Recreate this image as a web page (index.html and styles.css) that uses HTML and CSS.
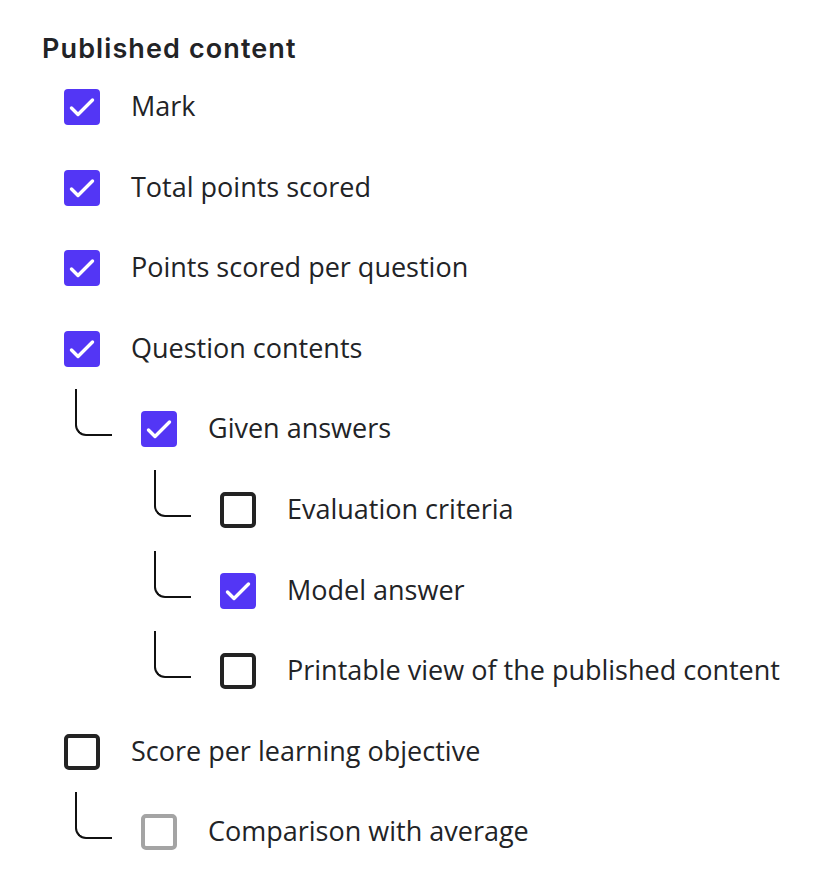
FILE: index.html
```html
<!DOCTYPE html>
<html>
<head>
<meta charset="utf-8">
<link rel="stylesheet" href="styles.css">
</head>
<body>
<section class="panel">
  <h2 class="title">Published content</h2>
  <ul class="list">
    <li class="row lvl0"><span class="box checked"><svg viewBox="0 0 36 36"><path d="M7.5 19 L14 25.5 L28.5 11"/></svg></span><span class="label">Mark</span></li>
    <li class="row lvl0"><span class="box checked"><svg viewBox="0 0 36 36"><path d="M7.5 19 L14 25.5 L28.5 11"/></svg></span><span class="label">Total points scored</span></li>
    <li class="row lvl0"><span class="box checked"><svg viewBox="0 0 36 36"><path d="M7.5 19 L14 25.5 L28.5 11"/></svg></span><span class="label">Points scored per question</span></li>
    <li class="row lvl0"><span class="box checked"><svg viewBox="0 0 36 36"><path d="M7.5 19 L14 25.5 L28.5 11"/></svg></span><span class="label">Question contents</span></li>
    <li class="row lvl1"><span class="conn"></span><span class="box checked"><svg viewBox="0 0 36 36"><path d="M7.5 19 L14 25.5 L28.5 11"/></svg></span><span class="label">Given answers</span></li>
    <li class="row lvl2"><span class="conn"></span><span class="box"></span><span class="label">Evaluation criteria</span></li>
    <li class="row lvl2"><span class="conn"></span><span class="box checked"><svg viewBox="0 0 36 36"><path d="M7.5 19 L14 25.5 L28.5 11"/></svg></span><span class="label">Model answer</span></li>
    <li class="row lvl2"><span class="conn"></span><span class="box"></span><span class="label">Printable view of the published content</span></li>
    <li class="row lvl0"><span class="box"></span><span class="label">Score per learning objective</span></li>
    <li class="row lvl1"><span class="conn"></span><span class="box disabled"></span><span class="label">Comparison with average</span></li>
  </ul>
</section>
</body>
</html>
```

FILE: styles.css
```css
* { box-sizing: border-box; }
html, body { margin: 0; padding: 0; background: #ffffff; }
body { font-family: "Open Sans", "Noto Sans", sans-serif; color: #222326; }
.panel { padding: 30px 0 0 42px; }
.title {
  margin: 0;
  font-family: "Inter", "Open Sans", sans-serif;
  font-weight: 600;
  font-size: 27px;
  line-height: 38px;
  letter-spacing: 1.1px;
  color: #222326;
}
.list {
  list-style: none;
  margin: 21px 0 0 0;
  padding: 0 0 0 22px;
  display: flex;
  flex-direction: column;
  gap: 44.6px;
}
.row { display: flex; align-items: center; height: 36px; }
.lvl1 { padding-left: 11px; }
.lvl2 { padding-left: 90px; }
.conn {
  align-self: flex-start;
  width: 37px;
  height: 47px;
  margin-top: -22px;
  margin-right: 29px;
  border-left: 2px solid #111;
  border-bottom: 2px solid #111;
  border-bottom-left-radius: 11px;
  flex: none;
}
.box {
  width: 36px;
  height: 36px;
  flex: none;
  border: 4px solid #232323;
  border-radius: 5px;
  display: flex;
  align-items: center;
  justify-content: center;
}
.box.checked { background: #5336F5; border: none; border-radius: 4px; }
.box.disabled { border-color: #a4a4a4; }
.box svg { width: 36px; height: 36px; display: block; }
.box svg path { fill: none; stroke: #ffffff; stroke-width: 3.4; stroke-linecap: round; stroke-linejoin: round; }
.label { margin-left: 31px; font-size: 27px; line-height: 36px; white-space: nowrap; position: relative; top: -1px; }
```
